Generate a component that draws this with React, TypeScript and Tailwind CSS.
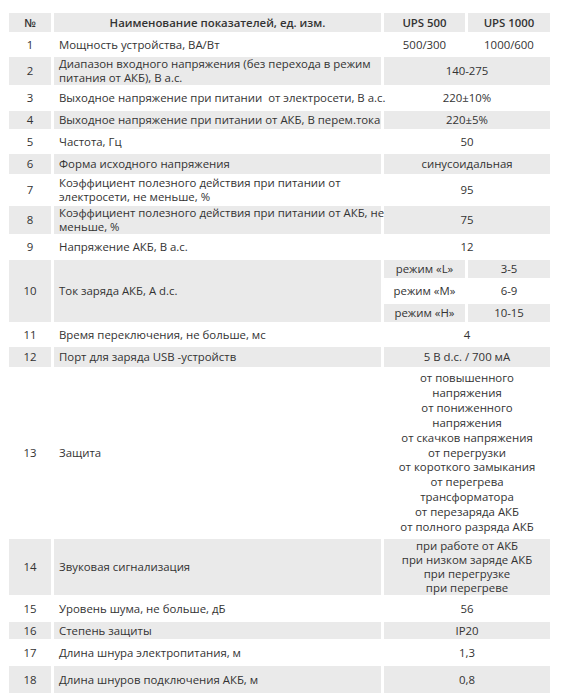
import type { ReactNode } from 'react';

type Row = {
  n: string;
  name: ReactNode;
  h: number;
  a?: ReactNode; // UPS 500
  b?: ReactNode; // UPS 1000
  v?: ReactNode; // same for both models
};

const PROTECTION = [
  'от повышенного',
  'напряжения',
  'от пониженного',
  'напряжения',
  'от скачков напряжения',
  'от перегрузки',
  'от короткого замыкания',
  'от перегрева',
  'трансформатора',
  'от перезаряда АКБ',
  'от полного разряда АКБ',
];

const ALARMS = ['при работе от АКБ', 'при низком заряде АКБ', 'при перегрузке', 'при перегреве'];

const MODES = [
  { label: 'режим «L»', value: '3-5', h: 18 },
  { label: 'режим «М»', value: '6-9', h: 22 },
  { label: 'режим «Н»', value: '10-15', h: 18 },
];

const ROWS: Row[] = [
  { n: '1', name: 'Мощность устройства, ВА/Вт', h: 21, a: '500/300', b: '1000/600' },
  {
    n: '2',
    name: <>Диапазон входного напряжения (без перехода в режим<br />питания от АКБ), В а.с.</>,
    h: 25,
    v: '140-275',
  },
  { n: '3', name: 'Выходное напряжение при питании\u00a0 от электросети, В а.с.', h: 22, v: '220±10%' },
  { n: '4', name: 'Выходное напряжение при питании от АКБ, В перем.тока', h: 18, v: '220±5%' },
  { n: '5', name: 'Частота, Гц', h: 21, v: '50' },
  { n: '6', name: 'Форма исходного напряжения', h: 20, v: 'синусоидальная' },
  {
    n: '7',
    name: <>Коэффициент полезного действия при питании от<br />электросети, не меньше, %</>,
    h: 28,
    v: '95',
  },
  {
    n: '8',
    name: <>Коэффициент полезного действия при питании от АКБ, не<br />меньше, %</>,
    h: 25,
    v: '75',
  },
  { n: '9', name: 'Напряжение АКБ, В а.с.', h: 22, v: '12' },
  { n: '10', name: 'Ток заряда АКБ, А d.c.', h: 0 },
  { n: '11', name: 'Время переключения, не больше, мс', h: 21, v: '4' },
  { n: '12', name: 'Порт для заряда USB -устройств', h: 20, v: '5 В d.c. / 700 мА' },
  {
    n: '13',
    name: 'Защита',
    h: 168,
    v: (
      <div className="leading-[14.9px]">
        {PROTECTION.map((line, i) => (
          <div key={i}>{line}</div>
        ))}
      </div>
    ),
  },
  {
    n: '14',
    name: 'Звуковая сигнализация',
    h: 55,
    v: (
      <div className="leading-[14px]">
        {ALARMS.map((line) => (
          <div key={line}>{line}</div>
        ))}
      </div>
    ),
  },
  { n: '15', name: 'Уровень шума, не больше, дБ', h: 23, v: '56' },
  { n: '16', name: 'Степень защиты', h: 17, v: 'IP20' },
  { n: '17', name: 'Длина шнура электропитания, м', h: 23, v: '1,3' },
  { n: '18', name: 'Длина шнуров подключения АКБ, м', h: 27, v: '0,8' },
];

export default function App() {
  return (
    <div className="min-h-[700px] w-[564px] bg-white pt-[11px] pl-[6px] font-['Open_Sans',sans-serif] text-[11.4px] leading-[14px] text-[#333333]">
      <table className="w-[547px] table-fixed border-separate border-spacing-x-[3px] border-spacing-y-[2px]">
        <colgroup>
          <col className="w-[42px]" />
          <col className="w-[327px]" />
          <col className="w-[81px]" />
          <col className="w-[82px]" />
        </colgroup>
        <thead>
          <tr className="h-[19px]">
            <th className="bg-[#eaeaea] p-0 text-center font-semibold">№</th>
            <th className="bg-[#eaeaea] p-0 text-center font-semibold">Наименование показателей, ед. изм.</th>
            <th className="bg-[#eaeaea] p-0 text-center font-semibold">UPS 500</th>
            <th className="bg-[#eaeaea] p-0 text-center font-semibold">UPS 1000</th>
          </tr>
        </thead>
        <tbody>
          {ROWS.map((row) => {
            const gray = Number(row.n) % 2 === 0;
            const bg = gray ? 'bg-[#eaeaea]' : 'bg-white';

            // Ток заряда: three charge modes, number and name span all of them
            if (row.n === '10') {
              return MODES.map((m, i) => {
                const sub = i % 2 === 0 ? 'bg-[#eaeaea]' : 'bg-white';
                return (
                  <tr key={m.label} style={{ height: m.h }}>
                    {i === 0 && (
                      <>
                        <td rowSpan={3} className={`${bg} p-0 text-center`}>{row.n}</td>
                        <td rowSpan={3} className={`${bg} p-0 pl-[5px] text-left`}>{row.name}</td>
                      </>
                    )}
                    <td className={`${sub} p-0 text-center`}>{m.label}</td>
                    <td className={`${sub} p-0 text-center`}>{m.value}</td>
                  </tr>
                );
              });
            }

            return (
              <tr key={row.n} style={{ height: row.h }}>
                <td className={`${bg} p-0 text-center`}>{row.n}</td>
                <td className={`${bg} p-0 pl-[5px] text-left whitespace-nowrap`}>{row.name}</td>
                {row.v !== undefined ? (
                  <td colSpan={2} className={`${bg} p-0 text-center`}>{row.v}</td>
                ) : (
                  <>
                    <td className={`${bg} p-0 text-center`}>{row.a}</td>
                    <td className={`${bg} p-0 text-center`}>{row.b}</td>
                  </>
                )}
              </tr>
            );
          })}
        </tbody>
      </table>
    </div>
  );
}
